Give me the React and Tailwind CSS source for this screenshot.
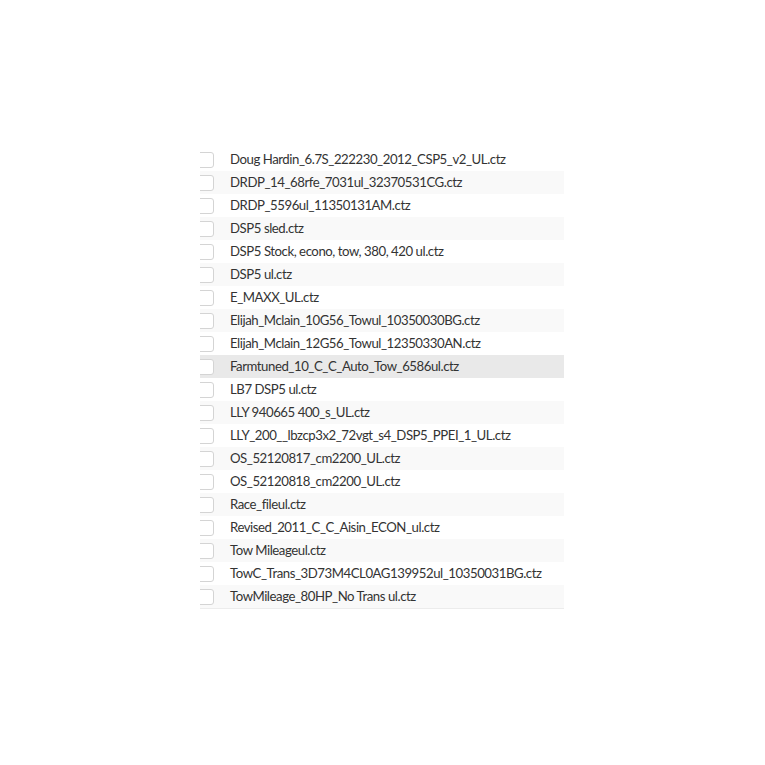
import React from "react";

const files = [
  "Doug Hardin_6.7S_222230_2012_CSP5_v2_UL.ctz",
  "DRDP_14_68rfe_7031ul_32370531CG.ctz",
  "DRDP_5596ul_11350131AM.ctz",
  "DSP5 sled.ctz",
  "DSP5 Stock, econo, tow, 380, 420 ul.ctz",
  "DSP5 ul.ctz",
  "E_MAXX_UL.ctz",
  "Elijah_Mclain_10G56_Towul_10350030BG.ctz",
  "Elijah_Mclain_12G56_Towul_12350330AN.ctz",
  "Farmtuned_10_C_C_Auto_Tow_6586ul.ctz",
  "LB7 DSP5 ul.ctz",
  "LLY 940665 400_s_UL.ctz",
  "LLY_200__lbzcp3x2_72vgt_s4_DSP5_PPEI_1_UL.ctz",
  "OS_52120817_cm2200_UL.ctz",
  "OS_52120818_cm2200_UL.ctz",
  "Race_fileul.ctz",
  "Revised_2011_C_C_Aisin_ECON_ul.ctz",
  "Tow Mileageul.ctz",
  "TowC_Trans_3D73M4CL0AG139952ul_10350031BG.ctz",
  "TowMileage_80HP_No Trans ul.ctz",
];

export default function App() {
  return (
    <div className="w-[765px] h-[765px] bg-white pt-[148px] pl-[200px]">
      <div className="w-[364px] overflow-hidden border-b border-[#ececec] font-['Lato','Liberation_Sans',sans-serif] text-[13.2px] tracking-[-0.45px] text-[#333]">
        {files.map((name, i) => (
          <div
            key={name}
            className={
              "h-[23px] flex items-center " +
              (i === 9 ? "bg-[#e9e9e9]" : i % 2 === 1 ? "bg-[#f9f9f9]" : "bg-white")
            }
          >
            <span className="-ml-[3px] w-[17px] h-[16px] shrink-0 rounded-[3px] border border-[#d4d4d4] bg-white" />
            <span className="ml-[16px] whitespace-nowrap leading-none">{name}</span>
          </div>
        ))}
      </div>
    </div>
  );
}
